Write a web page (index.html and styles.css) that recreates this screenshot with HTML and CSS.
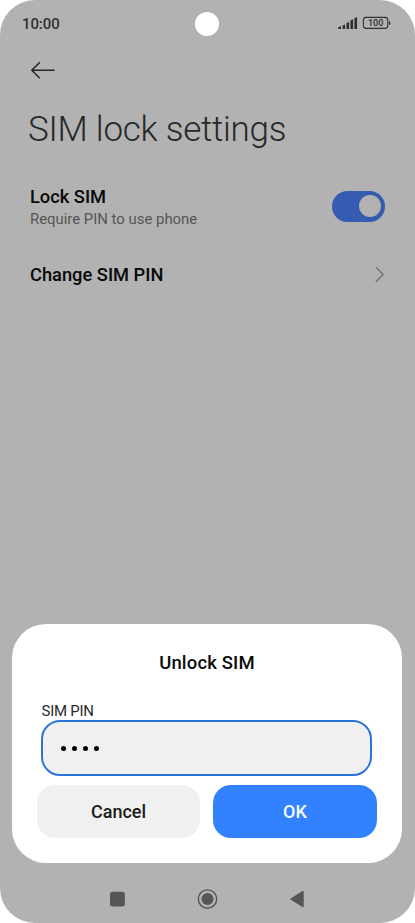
FILE: index.html
```html
<!DOCTYPE html>
<html lang="en">
<head>
<meta charset="utf-8">
<title>SIM lock settings</title>
<link rel="stylesheet" href="styles.css">
</head>
<body>
<div class="phone">
  <header class="status">
    <span class="clock">10:00</span>
    <span class="camera"></span>
    <svg class="indicators" width="54" height="16" viewBox="0 0 54 16">
      <g fill="#303030">
        <path d="M.3 11.2 3 10.1V13H.3zM4.6 9.4 7.1 8.4V13H4.6zM8.5 7.1 11.1 5.9V13H8.5zM12.4 4.6 15.1 3.3V13h-2.7zM16.4 2.2 19.1.9V13h-2.7z"/>
        <path d="M51 5c1.8 0 1.8 4 0 4z"/>
      </g>
      <rect x="25.4" y="1.4" width="24.4" height="11" rx="2.8" fill="none" stroke="#303030" stroke-width="1.1"/>
      <text class="charge" x="37.7" y="10.3" text-anchor="middle" textLength="15.5" lengthAdjust="spacingAndGlyphs">100</text>
    </svg>
  </header>
  <nav class="toolbar">
    <svg width="26" height="20" viewBox="0 0 26 20" fill="none" stroke="#282828" stroke-width="1.6" stroke-linecap="round" stroke-linejoin="round"><path d="M24 10.2H2M9.3 2.7 1.8 10.2l7.5 7.5"/></svg>
  </nav>
  <h1 class="title">SIM lock settings</h1>
  <main class="settings">
    <div class="row row-lock">
      <div class="texts">
        <div class="name">Lock SIM</div>
        <div class="hint">Require PIN to use phone</div>
      </div>
      <span class="switch"><span class="knob"></span></span>
    </div>
    <div class="row row-change">
      <div class="name">Change SIM PIN</div>
      <svg width="10" height="16" viewBox="0 0 10 16" fill="none" stroke="#707070" stroke-width="1.3" stroke-linecap="round" stroke-linejoin="round"><path d="m1.2.5 7 7-7 7"/></svg>
    </div>
  </main>
  <section class="dialog">
    <h2 class="heading">Unlock SIM</h2>
    <div class="label">SIM PIN</div>
    <div class="field"><i></i><i></i><i></i><i></i></div>
    <div class="actions">
      <button class="btn cancel">Cancel</button>
      <button class="btn ok">OK</button>
    </div>
  </section>
  <footer class="navbar">
    <svg width="415" height="60" viewBox="0 0 415 60" fill="#555">
      <rect x="110" y="28.8" width="14.8" height="14.8" rx="2.3"/>
      <circle cx="207.5" cy="36.1" r="9.2" fill="none" stroke="#555" stroke-width="1.4"/>
      <circle cx="207.5" cy="36.1" r="6"/>
      <path d="M290.7 35.5q-.8.6 0 1.2l11.8 7.4q1.2.6 1.2-.6V28.7q0-1.2-1.2-.6z"/>
    </svg>
  </footer>
</div>
</body>
</html>
```
FILE: styles.css
```css
* { box-sizing: border-box; }
body { margin: 0; background: #fff; font-family: Roboto, sans-serif; }
.phone {
  width: 415px;
  height: 923px;
  display: flex;
  flex-direction: column;
  background: #b2b2b2;
  border-radius: 35px;
  overflow: hidden;
}
.status {
  height: 46px;
  display: grid;
  grid-template-columns: 1fr 24px 1fr;
  align-items: center;
  padding: 1px 23px 0 22px;
}
.clock { font-size: 15px; font-weight: 500; letter-spacing: -0.1px; color: #303030; }
.camera { width: 24px; height: 24px; border-radius: 50%; background: #fff; }
.indicators { justify-self: end; }
.charge { font-size: 9.5px; font-weight: 500; fill: #303030; }
.toolbar { height: 48px; padding: 14px 0 0 30px; }
.toolbar svg { display: block; }
.title {
  margin: 0;
  padding-left: 28px;
  height: 70px;
  line-height: 72px;
  font-size: 35px;
  font-weight: 300;
  letter-spacing: -0.27px;
  color: #282828;
  white-space: nowrap;
}
.settings { flex: 1; padding: 0 30px; }
.row { display: flex; justify-content: space-between; align-items: center; }
.row-lock { height: 84px; }
.row-change { height: 53px; }
.texts { padding-top: 3px; }
.name { font-size: 18.3px; line-height: 23px; font-weight: 500; color: #080808; }
.hint { margin-top: 1px; font-size: 14.9px; line-height: 21px; color: #555; }
.switch {
  width: 53px;
  height: 31px;
  padding: 4px 4px 4px 27px;
  border-radius: 16px;
  background: #355cb0;
}
.knob { display: block; width: 22px; height: 22px; border-radius: 50%; background: #b2b2b2; }
.dialog {
  width: 390px;
  height: 239px;
  margin-left: 12px;
  padding: 27px 25px 0;
  border-radius: 34px;
  background: #fff;
}
.heading { margin: 0; text-align: center; font-size: 18.5px; letter-spacing: 0.15px; line-height: 24px; font-weight: 500; color: #0b0b0b; }
.label { margin: 25px 0 0 4.5px; font-size: 15px; letter-spacing: -0.25px; line-height: 22px; height: 20px; color: #2a2a2a; }
.field {
  width: 331px;
  height: 56px;
  margin: 0 0 9px 4px;
  padding-left: 17.5px;
  display: flex;
  align-items: center;
  gap: 6px;
  border: 2px solid #2b72dd;
  border-radius: 19px;
  background: #f0f0f0;
}
.field i { width: 5px; height: 5px; border-radius: 50%; background: #000; }
.actions { display: flex; justify-content: space-between; }
.btn {
  height: 53px;
  padding: 0;
  border: 0;
  border-radius: 18px;
  font: 500 18px/53px Roboto, sans-serif;
}
.cancel { width: 163px; background: #f0f0f0; color: #1c1c1c; }
.ok { width: 164px; background: #3282ff; color: #f4faff; }
.navbar { height: 60px; }
.navbar svg { display: block; }
```
